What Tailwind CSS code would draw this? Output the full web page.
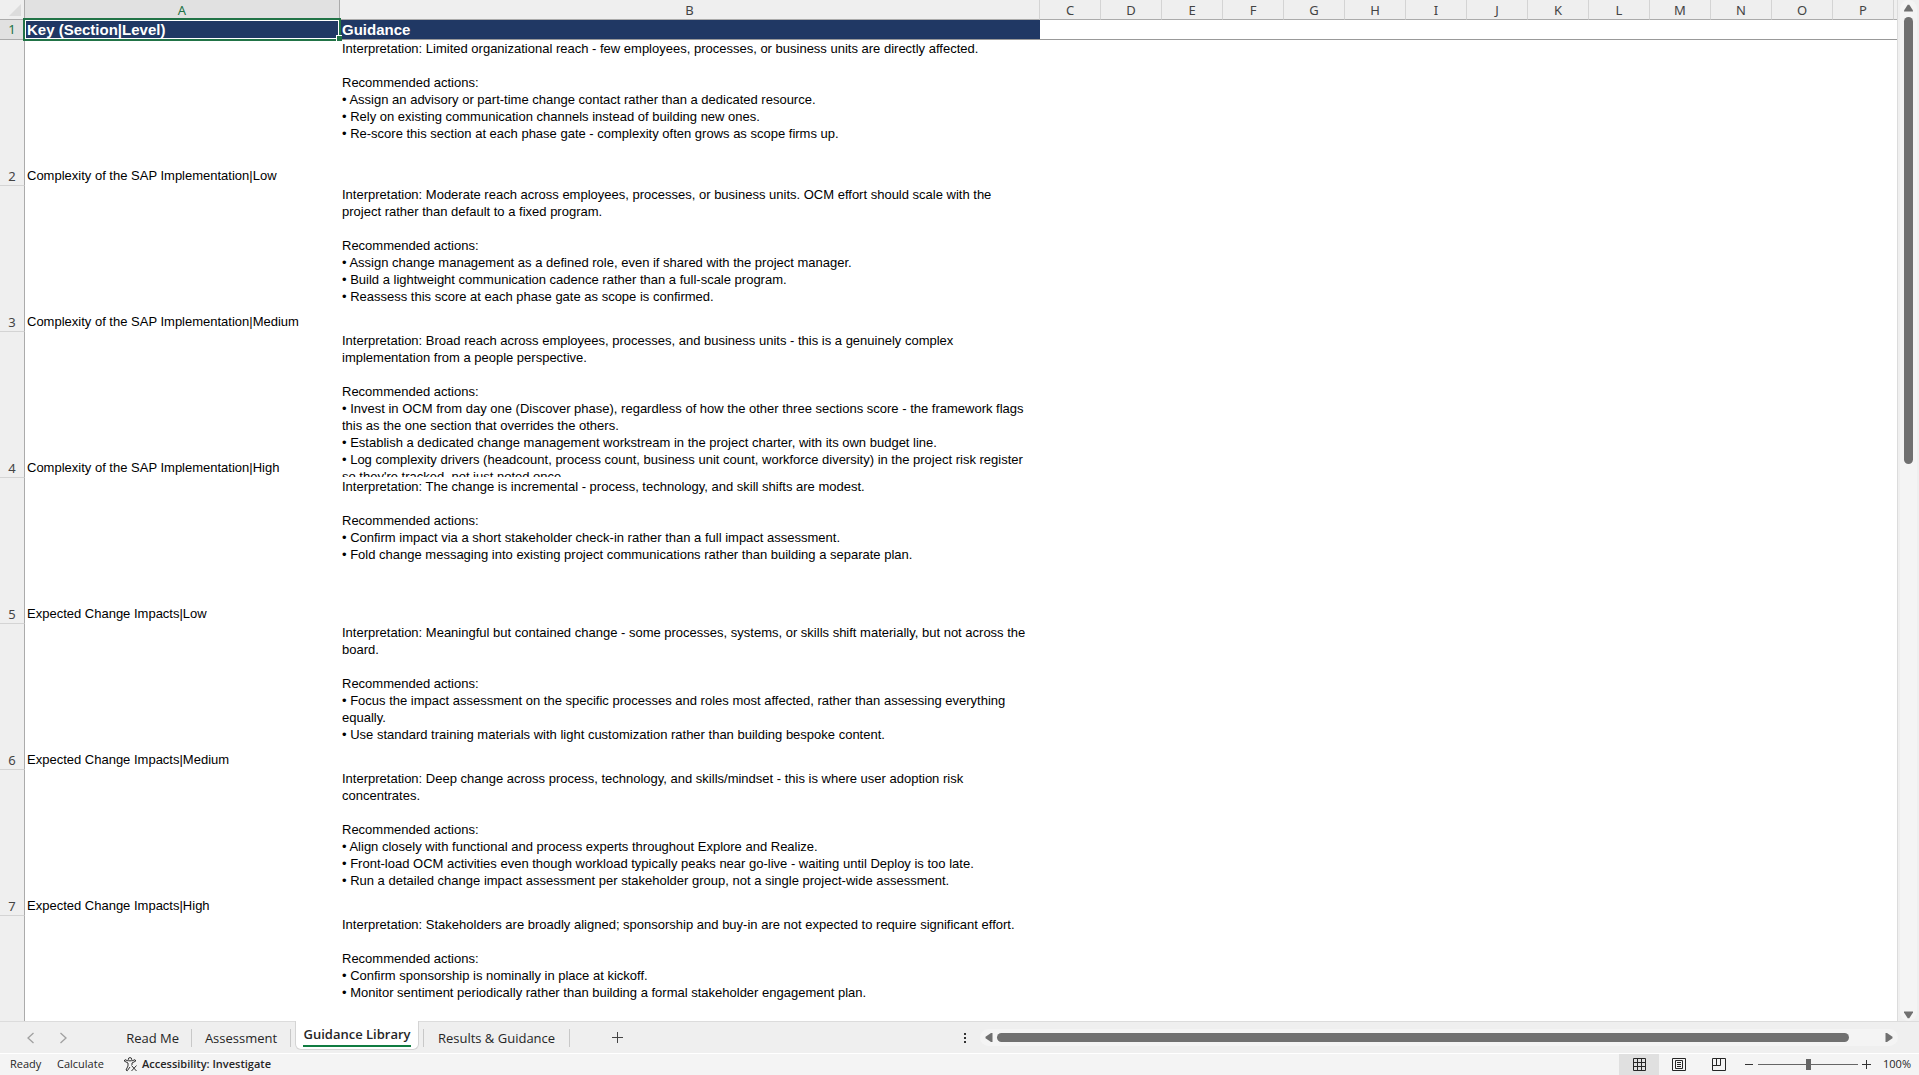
<!DOCTYPE html>
<html lang="en">
<head>
  <meta charset="UTF-8">
  <meta name="viewport" content="width=device-width, initial-scale=1.0">
  <title>Guidance Library</title>
  <script src="https://cdn.jsdelivr.net/npm/@tailwindcss/browser@4"></script>
</head>
<body class="h-screen flex flex-col overflow-hidden bg-[#efefef] font-['Open_Sans',sans-serif] text-[#262626]">

  <!--Sheet Section Start-->
  <main class="flex flex-1 min-h-0">
    <div class="flex-1 min-w-0 overflow-hidden bg-white border-r border-[#dcdcdc]">
      <table class="table-fixed w-full border-separate border-spacing-0 font-['Liberation_Sans',Arial,sans-serif] text-[13px] leading-[17px] text-black">
        <colgroup id="cols">
          <col class="w-[25px]">
          <col class="w-[315px]">
          <col class="w-[700px]">
        </colgroup>
        <thead class="font-['Noto_Sans',sans-serif] text-[#444]">
          <tr id="letters" class="h-5 bg-[#efefef]">
            <td class="p-0 border-b border-r border-[#ababab]">
              <svg class="ml-auto mr-[3px]" width="12" height="12" viewBox="0 0 12 12"><path d="M12 0V12H0z" fill="#dcdcdc"/></svg>
            </td>
            <th scope="col" class="p-0 pt-[2px] font-normal bg-[#e1e1e1] text-[#217346] border-b border-r border-[#ababab]">A</th>
            <th scope="col" class="p-0 pt-[2px] font-normal border-b border-r border-b-[#ababab] border-r-[#d4d4d4]">B</th>
          </tr>
        </thead>
        <tbody id="rows">
          <tr class="h-5">
            <th scope="row" class="p-0 font-normal font-['Noto_Sans',sans-serif] bg-[#e1e1e1] text-[#217346] border-b border-r border-[#ababab]">1</th>
            <td class="relative p-0 pl-[2px] bg-[#203864] text-white font-bold text-[15px] leading-[19px] border-b border-[#999]">Key (Section|Level)
              <!-- selected cell -->
              <div class="absolute -left-[2px] -top-[2px] -right-[1px] -bottom-[2px] border-2 border-[#217346]"><div class="h-full border border-white"></div></div>
              <div class="absolute -right-[2px] -bottom-[2px] size-[6px] bg-[#217346] border-t border-l border-white"></div>
            </td>
            <td class="p-0 pl-[2px] bg-[#203864] text-white font-bold text-[15px] leading-[19px] border-b border-[#999]">Guidance</td>
            <td colspan="15" class="p-0 border-b border-[#999]"></td>
          </tr>
        </tbody>
      </table>
    </div>
    <!-- vertical scroll bar -->
    <div class="w-[21px] px-[2px]">
      <div class="h-full w-[17px] rounded-full bg-[#f4f4f4] flex flex-col items-center pt-1 pb-[2px]">
        <svg width="9" height="8" viewBox="0 0 9 8"><path d="M3.7.8h1.6L9 6.5V7.5H0V6.5z" fill="#707070"/></svg>
        <div class="flex-1 w-full pt-[5px] flex justify-center"><div class="w-[9px] h-[45%] rounded-full bg-[#707070]"></div></div>
        <svg width="9" height="8" viewBox="0 0 9 8"><path d="M3.7 7.2h1.6L9 1.5V.5H0V1.5z" fill="#707070"/></svg>
      </div>
    </div>
  </main>
  <!--Sheet Section End-->

  <!--Tab Bar Start-->
  <nav class="h-8 flex shrink-0 text-[13px] border-t border-[#dcdcdc]">
    <div class="flex items-center w-[98px] pl-[26px] gap-6">
      <button aria-label="Previous sheet"><svg width="9" height="12" viewBox="0 0 9 12" fill="none" stroke="#a0a0a0" stroke-width="1.3"><path d="M7.5 1L2 6l5.500 5"/></svg></button>
      <button aria-label="Next sheet"><svg width="9" height="12" viewBox="0 0 9 12" fill="none" stroke="#a0a0a0" stroke-width="1.3"><path d="M1.500 1L7 6l-5.500 5"/></svg></button>
    </div>
    <div class="flex items-center">
      <a href="#" class="w-[94px] h-[18px] leading-[18px] text-right pr-3 border-r border-[#c8c8c8]">Read Me</a>
      <a href="#" class="w-[99px] h-[18px] leading-[18px] text-center border-r border-[#c8c8c8]">Assessment</a>
      <a href="#" class="w-[124px] h-[29px] mx-1 -mt-px self-start pt-1 flex justify-center bg-white rounded-b-md border border-t-0 border-[#d4d4d4] font-semibold"><span class="h-[22px] leading-[18px] border-b-2 border-[#107c41]">Guidance Library</span></a>
      <a href="#" class="w-[147px] h-[18px] leading-[18px] text-center border-x border-[#c8c8c8]">Results &amp; Guidance</a>
      <button aria-label="New sheet" class="ml-[42px]"><svg width="12" height="12" viewBox="0 0 12 12" stroke="#444" stroke-width="1"><path d="M5.500 0v11M0 5.500h11"/></svg></button>
    </div>
    <div class="flex-1"></div>
    <!-- horizontal scroll bar -->
    <div class="w-[56.500%] max-w-[934px] flex items-center pr-[21px] box-content">
      <svg class="mr-[14px] shrink-0" width="2" height="10" viewBox="0 0 2 10" fill="#333"><path d="M0 0h2v2H0zM0 4h2v2H0zM0 8h2v2H0z"/></svg>
      <div class="flex-1 h-[17px] rounded-full bg-[#f4f4f4] flex items-center px-[5px]">
        <svg width="8" height="9" viewBox="0 0 8 9"><path d="M.5 3.700v1.600L6 9H7.500V0H6z" fill="#707070"/></svg>
        <div class="flex-1 pl-1"><div class="h-[9px] w-[96%] rounded-full bg-[#707070]"></div></div>
        <svg width="8" height="9" viewBox="0 0 8 9"><path d="M7.500 3.700v1.600L2 9H.5V0H2z" fill="#707070"/></svg>
      </div>
    </div>
  </nav>
  <!--Tab Bar End-->

  <!--Status Bar Start-->
  <footer class="h-[22px] shrink-0 flex items-center bg-[#f4f4f4] border-t border-white text-[11px] pl-[10px] pr-2">
    <span class="w-[47px]">Ready</span>
    <span class="w-[66px]">Calculate</span>
    <button class="flex items-center gap-1 font-semibold">
      <svg width="15" height="15" viewBox="0 0 15 15" fill="none" stroke="#333" stroke-width="1"><circle cx="7" cy="2.300" r="1.700"/><path d="M5.300 4L2 2.700 1.200 4 5 6v3l-2 4 1.200.8L7 10M8.700 4L12 2.700l.8 1.300L9 6v2M8.500 8.500l5 5.500M13.500 8.500l-5 5.500"/></svg>
      Accessibility: Investigate
    </button>
    <div class="flex-1"></div>
    <button aria-label="Normal" class="w-10 h-[21px] bg-[#e0e0e0] flex items-center justify-center"><svg width="13" height="13" viewBox="0 0 13 13" fill="none" stroke="#262626"><path d="M.5.5h12v12H.5zM4.500.5v12M8.500.5v12M.5 4.500h12M.5 8.500h12"/></svg></button>
    <button aria-label="Page Layout" class="w-10 h-[21px] flex items-center justify-center"><svg width="14" height="13" viewBox="0 0 14 13" fill="none" stroke="#262626"><path d="M.5.5h13v12H.5zM3.500 2.500h7v8h-7zM5 4.500h4M5 6.500h4M5 8.500h4"/></svg></button>
    <button aria-label="Page Break Preview" class="w-10 h-[21px] flex items-center justify-center"><svg width="14" height="13" viewBox="0 0 14 13" fill="none" stroke="#262626"><path d="M.5.5h13v12H.5zM.5 7.500h8M4.500.5v7M8.500.5v7"/></svg></button>
    <button aria-label="Zoom Out" class="ml-[6px]"><svg width="8" height="9" viewBox="0 0 8 9" stroke="#333"><path d="M0 4.500h8"/></svg></button>
    <input type="range" aria-label="Zoom" min="0" max="100" value="50" class="ml-[5px] w-[100px] h-[11px] appearance-none bg-transparent [&::-webkit-slider-runnable-track]:h-px [&::-webkit-slider-runnable-track]:bg-[#666] [&::-webkit-slider-thumb]:appearance-none [&::-webkit-slider-thumb]:w-[5px] [&::-webkit-slider-thumb]:h-[11px] [&::-webkit-slider-thumb]:-mt-[5px] [&::-webkit-slider-thumb]:bg-[#666]">
    <button aria-label="Zoom In" class="ml-1"><svg width="9" height="9" viewBox="0 0 9 9" stroke="#333"><path d="M0 4.500h9M4.500 0v9"/></svg></button>
    <button class="w-10 text-right">100%</button>
  </footer>
  <!--Status Bar End-->

  <!--Javascript-->
  <script>
    const guidance = [
      ['2', 'Complexity of the SAP Implementation|Low', `Interpretation: Limited organizational reach - few employees, processes, or business units are directly affected.

Recommended actions:
• Assign an advisory or part-time change contact rather than a dedicated resource.
• Rely on existing communication channels instead of building new ones.
• Re-score this section at each phase gate - complexity often grows as scope firms up.`],
      ['3', 'Complexity of the SAP Implementation|Medium', `Interpretation: Moderate reach across employees, processes, or business units. OCM effort should scale with the
project rather than default to a fixed program.

Recommended actions:
• Assign change management as a defined role, even if shared with the project manager.
• Build a lightweight communication cadence rather than a full-scale program.
• Reassess this score at each phase gate as scope is confirmed.`],
      ['4', 'Complexity of the SAP Implementation|High', `Interpretation: Broad reach across employees, processes, and business units - this is a genuinely complex
implementation from a people perspective.

Recommended actions:
• Invest in OCM from day one (Discover phase), regardless of how the other three sections score - the framework flags
this as the one section that overrides the others.
• Establish a dedicated change management workstream in the project charter, with its own budget line.
• Log complexity drivers (headcount, process count, business unit count, workforce diversity) in the project risk register
so they're tracked, not just noted once.`],
      ['5', 'Expected Change Impacts|Low', `Interpretation: The change is incremental - process, technology, and skill shifts are modest.

Recommended actions:
• Confirm impact via a short stakeholder check-in rather than a full impact assessment.
• Fold change messaging into existing project communications rather than building a separate plan.`],
      ['6', 'Expected Change Impacts|Medium', `Interpretation: Meaningful but contained change - some processes, systems, or skills shift materially, but not across the
board.

Recommended actions:
• Focus the impact assessment on the specific processes and roles most affected, rather than assessing everything
equally.
• Use standard training materials with light customization rather than building bespoke content.`],
      ['7', 'Expected Change Impacts|High', `Interpretation: Deep change across process, technology, and skills/mindset - this is where user adoption risk
concentrates.

Recommended actions:
• Align closely with functional and process experts throughout Explore and Realize.
• Front-load OCM activities even though workload typically peaks near go-live - waiting until Deploy is too late.
• Run a detailed change impact assessment per stakeholder group, not a single project-wide assessment.`],
      ['', '', `Interpretation: Stakeholders are broadly aligned; sponsorship and buy-in are not expected to require significant effort.

Recommended actions:
• Confirm sponsorship is nominally in place at kickoff.
• Monitor sentiment periodically rather than building a formal stakeholder engagement plan.`]
    ];

    // Column letters C to P, then one empty column for the rest
    let cols = '';
    let letters = '';
    for (const letter of 'CDEFGHIJKLMNOP') {
      cols += '<col class="w-[61px]">';
      letters += `<th scope="col" class="p-0 pt-[2px] font-normal border-b border-r border-b-[#ababab] border-r-[#d4d4d4]">${letter}</th>`;
    }
    document.getElementById('cols').insertAdjacentHTML('beforeend', cols + '<col>');
    document.getElementById('letters').insertAdjacentHTML('beforeend', letters + '<td class="p-0 border-b border-[#ababab]"></td>');

    // Guidance rows
    guidance.forEach(([number, key, text]) => {
      document.getElementById('rows').insertAdjacentHTML('beforeend', `
        <tr class="h-[146px]">
          <th scope="row" class="p-0 font-normal align-bottom font-['Noto_Sans',sans-serif] text-[#444] bg-[#efefef] border-b border-r border-b-[#d4d4d4] border-r-[#ababab]">${number}</th>
          <td class="p-0 pl-[2px] pb-[2px] align-bottom">${key}</td>
          <td class="p-0 pl-[2px] align-top"><div class="h-[145px] overflow-hidden whitespace-pre">${text}</div></td>
          <td colspan="15"></td>
        </tr>`);
    });
  </script>
</body>
</html>
